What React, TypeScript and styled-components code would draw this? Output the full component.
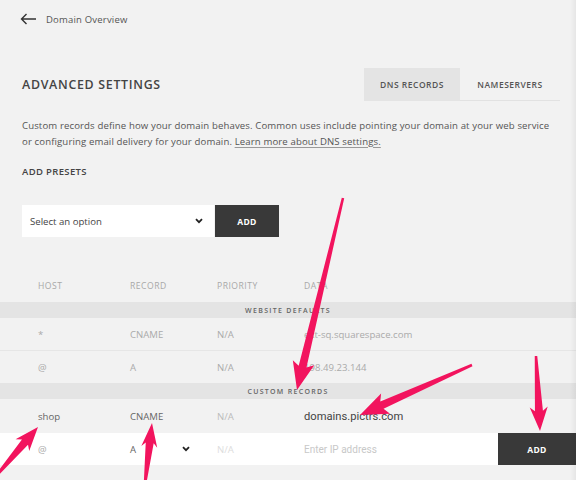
import React from 'react';
import styled, { createGlobalStyle } from 'styled-components';

const GlobalStyle = createGlobalStyle`
  body {
    margin: 0;
    background: #f2f2f2;
    font-family: 'Open Sans', 'Noto Sans', sans-serif;
  }
`;

type Row = { host: string; record: string; priority: string; data: string };

const defaults: Row[] = [
  { host: '*', record: 'CNAME', priority: 'N/A', data: 'ext-sq.squarespace.com' },
  { host: '@', record: 'A', priority: 'N/A', data: '198.49.23.144' },
];

type Arrow = { x1: number; y1: number; x2: number; y2: number; hw?: number; hl?: number };

const arrows: Arrow[] = [
  { x1: 343, y1: 198, x2: 297, y2: 390, hw: 22, hl: 28 },
  { x1: 472, y1: 365, x2: 360, y2: 415, hw: 22, hl: 28 },
  { x1: 536, y1: 356, x2: 540, y2: 431, hw: 18, hl: 24 },
  { x1: -4, y1: 476, x2: 38, y2: 427, hw: 18, hl: 24 },
  { x1: 145, y1: 484, x2: 152, y2: 423, hw: 16, hl: 24 },
];

function arrowPoints({ x1, y1, x2, y2, hw = 20, hl = 26 }: Arrow) {
  const dx = x2 - x1;
  const dy = y2 - y1;
  const len = Math.sqrt(dx * dx + dy * dy);
  const ux = dx / len;
  const uy = dy / len;
  const nx = -uy;
  const ny = ux;
  const bx = x2 - ux * hl;
  const by = y2 - uy * hl;
  const w0 = 2.5;
  const w1 = 8;
  const pts = [
    [x1 + (nx * w0) / 2, y1 + (ny * w0) / 2],
    [bx + (nx * w1) / 2 + ux * 4, by + (ny * w1) / 2 + uy * 4],
    [bx + (nx * hw) / 2, by + (ny * hw) / 2],
    [x2, y2],
    [bx - (nx * hw) / 2, by - (ny * hw) / 2],
    [bx - (nx * w1) / 2 + ux * 4, by - (ny * w1) / 2 + uy * 4],
    [x1 - (nx * w0) / 2, y1 - (ny * w0) / 2],
  ];
  return pts.map((p) => p.join(',')).join(' ');
}

const Chevron = () => (
  <svg width="8" height="6" viewBox="0 0 8 6">
    <path d="M1 1.2 L4 4.2 L7 1.2" fill="none" stroke="#222" strokeWidth="1.8" />
  </svg>
);

const App: React.FC = () => {
  return (
    <StyledPage>
      <GlobalStyle />
      <StyledBack>
        <svg width="17" height="12" viewBox="0 0 17 12">
          <path d="M16 6 H1.5 M6.5 1 L1.5 6 L6.5 11" fill="none" stroke="#333" strokeWidth="1.4" />
        </svg>
        <span>Domain Overview</span>
      </StyledBack>

      <StyledHeader>
        <h1>ADVANCED SETTINGS</h1>
        <StyledTabs>
          <StyledTab active>DNS RECORDS</StyledTab>
          <StyledTab>NAMESERVERS</StyledTab>
        </StyledTabs>
      </StyledHeader>

      <StyledDescription>
        Custom records define how your domain behaves. Common uses include pointing your domain at your web service
        <br />
        or configuring email delivery for your domain. <a>Learn more about DNS settings.</a>
      </StyledDescription>

      <StyledLabel>ADD PRESETS</StyledLabel>

      <StyledPresetForm>
        <StyledSelect>
          <span>Select an option</span>
          <Chevron />
        </StyledSelect>
        <StyledButton width={64}>ADD</StyledButton>
      </StyledPresetForm>

      <StyledTable>
        <StyledHeadRow>
          <div>HOST</div>
          <div>RECORD</div>
          <div>PRIORITY</div>
          <div>DATA</div>
        </StyledHeadRow>
        <StyledBand>WEBSITE DEFAULTS</StyledBand>
        {defaults.map((r, i) => (
          <StyledRow key={i} divider={i < defaults.length - 1}>
            <div>{r.host}</div>
            <div>{r.record}</div>
            <div>{r.priority}</div>
            <div>{r.data}</div>
          </StyledRow>
        ))}
        <StyledBand>CUSTOM RECORDS</StyledBand>
        <StyledRow custom>
          <div>shop</div>
          <div>CNAME</div>
          <StyledMuted>N/A</StyledMuted>
          <StyledData>domains.pictrs.com</StyledData>
        </StyledRow>
        <StyledInputRow>
          <StyledInputCells>
            <div>@</div>
            <StyledRecordSelect>
              <span>A</span>
              <Chevron />
            </StyledRecordSelect>
            <StyledFaint>N/A</StyledFaint>
            <StyledPlaceholder>Enter IP address</StyledPlaceholder>
          </StyledInputCells>
          <StyledButton width={78}>ADD</StyledButton>
        </StyledInputRow>
      </StyledTable>

      <StyledArrows width="576" height="480" viewBox="0 0 576 480">
        {arrows.map((a, i) => (
          <polygon key={i} points={arrowPoints(a)} fill="#f2145e" strokeLinejoin="round" />
        ))}
      </StyledArrows>
      <StyledEdge />
    </StyledPage>
  );
};

const StyledPage = styled.div`
  position: relative;
  width: 576px;
  height: 480px;
  overflow: hidden;
  background: #f2f2f2;
`;

const StyledBack = styled.div`
  height: 38px;
  display: flex;
  align-items: center;
  padding-left: 20px;
  gap: 9px;
  span {
    font-size: 9.5px;
    color: #555;
    letter-spacing: 0.2px;
  }
`;

const StyledHeader = styled.div`
  margin-top: 30px;
  height: 33px;
  display: flex;
  align-items: center;
  justify-content: space-between;
  padding: 0 16px 0 22px;
  h1 {
    margin: 0;
    font-size: 12.4px;
    font-weight: 600;
    color: #444;
    letter-spacing: 0.7px;
  }
`;

const StyledTabs = styled.div`
  display: flex;
  height: 33px;
`;

const StyledTab = styled.div<{ active?: boolean }>`
  width: ${(p) => (p.active ? 96 : 100)}px;
  display: flex;
  align-items: center;
  justify-content: center;
  font-size: 8.5px;
  font-weight: 600;
  letter-spacing: 0.5px;
  color: #555;
  background: ${(p) => (p.active ? '#e4e4e4' : 'transparent')};
  border-bottom: 1px solid ${(p) => (p.active ? '#e4e4e4' : '#e2e2e2')};
  box-sizing: border-box;
`;

const StyledDescription = styled.p`
  margin: 17px 0 0;
  padding: 0 0 0 22px;
  font-size: 9.6px;
  line-height: 15.5px;
  color: #555;
  letter-spacing: 0.12px;
  white-space: nowrap;
  a {
    color: #555;
    text-decoration: underline;
    text-decoration-color: #999;
    text-underline-offset: 2px;
  }
`;

const StyledLabel = styled.div`
  margin-top: 16px;
  padding-left: 22px;
  font-size: 9.5px;
  line-height: 14px;
  font-weight: 600;
  color: #444;
  letter-spacing: 0.35px;
`;

const StyledPresetForm = styled.div`
  margin: 26px 0 0 22px;
  display: flex;
  height: 32px;
`;

const StyledSelect = styled.div`
  width: 192px;
  box-sizing: border-box;
  background: #fff;
  display: flex;
  align-items: center;
  justify-content: space-between;
  padding: 0 11px 0 8px;
  font-size: 9.6px;
  color: #444;
`;

const StyledButton = styled.div<{ width: number }>`
  width: ${(p) => p.width}px;
  margin-left: 1px;
  background: #393939;
  color: #fff;
  display: flex;
  align-items: center;
  justify-content: center;
  font-size: 8.5px;
  font-weight: 700;
  letter-spacing: 0.3px;
`;

const StyledTable = styled.div`
  margin-top: 33px;
`;

const columns = `
  display: grid;
  grid-template-columns: 92px 87px 87px 1fr;
  align-items: center;
  padding-left: 38px;
`;

const StyledHeadRow = styled.div`
  ${columns};
  height: 32px;
  font-size: 8.6px;
  letter-spacing: 0.5px;
  color: #a8a8a8;
`;

const StyledBand = styled.div`
  height: 16px;
  background: #e4e4e4;
  display: flex;
  align-items: center;
  justify-content: center;
  font-size: 7px;
  font-weight: 600;
  letter-spacing: 1.3px;
  color: #666;
`;

const StyledRow = styled.div<{ divider?: boolean; custom?: boolean }>`
  ${columns};
  height: ${(p) => (p.custom ? 34 : 32)}px;
  font-size: 9.6px;
  color: ${(p) => (p.custom ? '#666' : '#aaa')};
  border-bottom: ${(p) => (p.divider ? '1px solid #e6e6e6' : 'none')};
`;

const StyledMuted = styled.div`
  color: #bbb;
`;

const StyledData = styled.div`
  font-family: Roboto, 'Noto Sans', sans-serif;
  font-size: 11.2px;
  color: #444;
`;

const StyledInputRow = styled.div`
  display: flex;
  height: 32px;
  background: #fff;
`;

const StyledInputCells = styled.div`
  ${columns};
  flex: 1;
  font-size: 9.6px;
  color: #aaa;
`;

const StyledRecordSelect = styled.div`
  display: flex;
  align-items: center;
  justify-content: space-between;
  width: 60px;
  color: #666;
`;

const StyledFaint = styled.div`
  color: #ddd;
`;

const StyledPlaceholder = styled.div`
  font-family: Roboto, 'Noto Sans', sans-serif;
  font-size: 10px;
  color: #c8c8c8;
`;

const StyledArrows = styled.svg`
  position: absolute;
  left: 0;
  top: 0;
  pointer-events: none;
`;

const StyledEdge = styled.div`
  position: absolute;
  top: 0;
  right: 0;
  width: 6px;
  height: 100%;
  background: linear-gradient(to right, rgba(0, 0, 0, 0), rgba(0, 0, 0, 0.05));
  pointer-events: none;
`;

export default App;
